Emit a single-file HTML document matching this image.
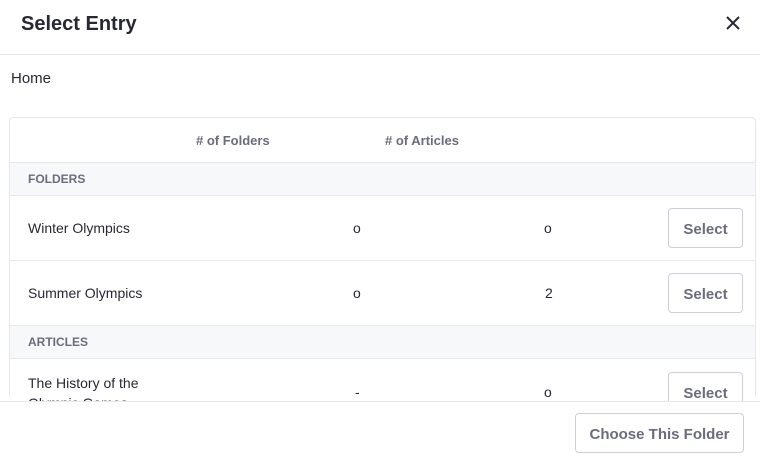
<!DOCTYPE html>
<html><head><style>
*{margin:0;padding:0;box-sizing:border-box}
html,body{width:760px;height:460px;overflow:hidden}
body{background:#fff;font-family:"Liberation Sans",sans-serif;color:#272833;position:relative}
.a{position:absolute}
.hdr{left:0;top:0;width:760px;height:55px;border-bottom:1px solid #e7e7ed}
.title{left:21px;top:13px;font-size:20px;font-weight:bold;color:#272833}
.body{left:0;top:55px;width:760px;height:346px;overflow:hidden}
.tbl{left:9px;top:62px;width:747px;height:280px;border:1px solid #e7e7ed;border-bottom:none;border-radius:4px 4px 0 0}
.row{position:absolute;left:0;width:745px;border-top:1px solid #e7e7ed}
.grp{background:#f7f8f9;font-size:12px;font-weight:bold;color:#6b6c7e;padding-left:18px;line-height:33px}
.th{font-size:13px;font-weight:bold;color:#6b6c7e}
.td{font-size:14px}
.btn{position:absolute;border:1px solid #cdced9;border-radius:4px;background:#fff;color:#6b6c7e;font-weight:bold;font-size:15px;text-align:center}
.sel{left:658px;width:75px;height:40px;line-height:42px}
.ftr{left:0;top:401px;width:760px;height:59px;border-top:1px solid #e7e7ed;background:#fff}
</style></head><body>
<div class="a hdr"><div class="a title">Select Entry</div>
<svg class="a" style="left:725px;top:15px" width="16" height="16" viewBox="0 0 16 16"><path d="M2 2L14 14M14 2L2 14" stroke="#272833" stroke-width="2"/></svg></div>
<div class="a body">
<div class="a td" style="left:11px;top:15px;font-size:15px">Home</div>
<div class="a tbl">
<div class="a th" style="left:186px;top:15px"># of Folders</div>
<div class="a th" style="left:375px;top:15px"># of Articles</div>
<div class="row grp" style="top:44px;height:33px">FOLDERS</div>
<div class="row" style="top:77px;height:65px">
<div class="a td" style="left:18px;top:24px">Winter Olympics</div>
<div class="a td" style="left:343px;top:24px">o</div>
<div class="a td" style="left:534px;top:24px">o</div>
<div class="btn sel" style="top:12px">Select</div></div>
<div class="row" style="top:142px;height:65px">
<div class="a td" style="left:18px;top:24px">Summer Olympics</div>
<div class="a td" style="left:343px;top:24px">o</div>
<div class="a td" style="left:535px;top:24px">2</div>
<div class="btn sel" style="top:12px">Select</div></div>
<div class="row grp" style="top:207px;height:33px">ARTICLES</div>
<div class="row" style="top:240px;height:40px">
<div class="a td" style="left:18px;top:14px;width:130px;line-height:20px">The History of the Olympic Games</div>
<div class="a td" style="left:345px;top:25px">-</div>
<div class="a td" style="left:534px;top:25px">o</div>
<div class="btn sel" style="top:13px">Select</div></div>
</div></div>
<div class="a ftr"><div class="btn" style="left:575px;top:11px;width:169px;height:40px;line-height:42px;font-size:15px">Choose This Folder</div></div>
</body></html>
